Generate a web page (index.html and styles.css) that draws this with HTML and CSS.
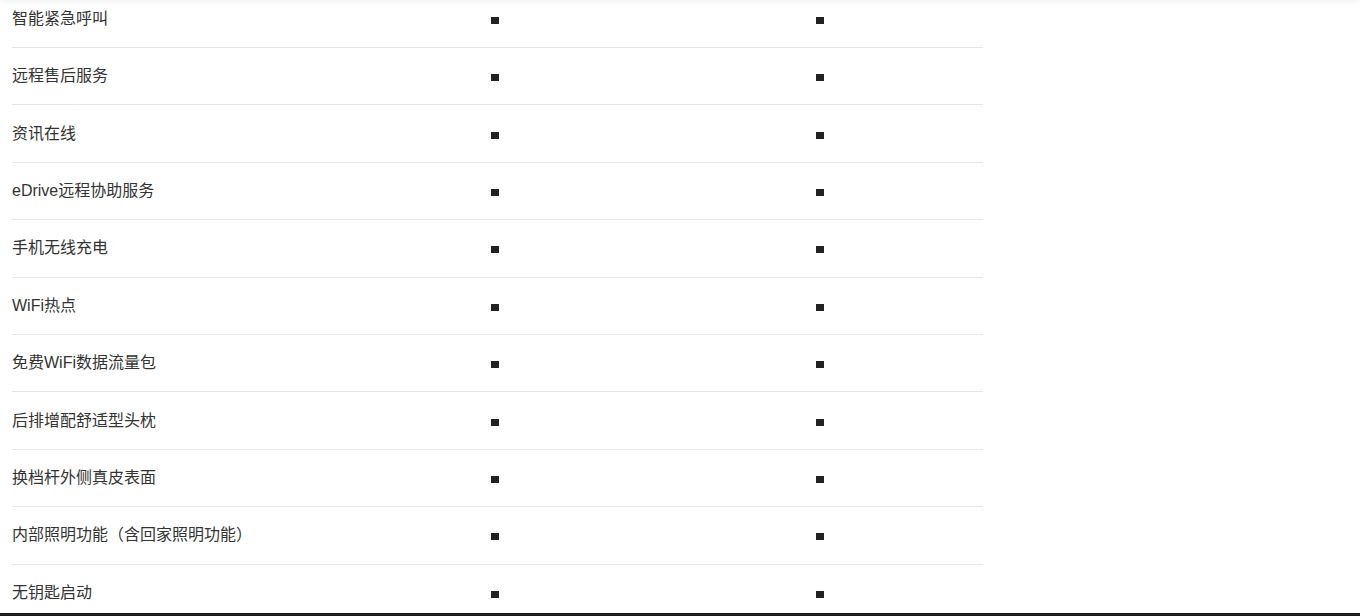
FILE: index.html
```html
<!DOCTYPE html>
<html lang="zh-CN">
<head>
<meta charset="utf-8">
<title>配置</title>
<link rel="stylesheet" href="styles.css">
</head>
<body>
<div class="top-shade"></div>
<main class="page">
  <table class="spec">
    <colgroup><col class="c1"><col class="c2"><col class="c3"></colgroup>
    <tbody>
      <tr><td>智能紧急呼叫</td><td><span class="dot"></span></td><td><span class="dot"></span></td></tr>
      <tr><td>远程售后服务</td><td><span class="dot"></span></td><td><span class="dot"></span></td></tr>
      <tr><td>资讯在线</td><td><span class="dot"></span></td><td><span class="dot"></span></td></tr>
      <tr><td>eDrive远程协助服务</td><td><span class="dot"></span></td><td><span class="dot"></span></td></tr>
      <tr><td>手机无线充电</td><td><span class="dot"></span></td><td><span class="dot"></span></td></tr>
      <tr><td>WiFi热点</td><td><span class="dot"></span></td><td><span class="dot"></span></td></tr>
      <tr><td>免费WiFi数据流量包</td><td><span class="dot"></span></td><td><span class="dot"></span></td></tr>
      <tr><td>后排增配舒适型头枕</td><td><span class="dot"></span></td><td><span class="dot"></span></td></tr>
      <tr><td>换档杆外侧真皮表面</td><td><span class="dot"></span></td><td><span class="dot"></span></td></tr>
      <tr><td>内部照明功能（含回家照明功能）</td><td><span class="dot"></span></td><td><span class="dot"></span></td></tr>
      <tr><td>无钥匙启动</td><td><span class="dot"></span></td><td><span class="dot"></span></td></tr>
    </tbody>
  </table>
</main>
<div class="bottom-bar"></div>
</body>
</html>
```

FILE: styles.css
```css
html, body {
  margin: 0;
  padding: 0;
  background: #fff;
  overflow: hidden;
}
body {
  font-family: "Liberation Sans", "Noto Sans CJK SC", sans-serif;
  font-size: 16px;
  color: #333;
}
.page {
  padding-left: 12px;
}
.spec {
  border-collapse: collapse;
  width: 971px;
  margin-top: -9.4px;
}
.c1 { width: 479px; }
.c2 { width: 325px; }
.c3 { width: 167px; }
.spec td {
  height: 56.4px;
  padding: 0;
  line-height: 22px;
  vertical-align: middle;
  border-bottom: 1px solid #e6e6e6;
  white-space: nowrap;
}
.spec tr:last-child td {
  border-bottom: none;
}
.dot {
  display: inline-block;
  width: 8px;
  height: 7px;
  background: #222;
  position: relative;
  top: 0;
}
.top-shade {
  position: fixed;
  top: -10px;
  left: 0;
  right: 0;
  height: 10px;
  box-shadow: 0 1px 6px rgba(0, 0, 0, 0.07);
  background: #fff;
}
.bottom-bar {
  position: fixed;
  left: 0;
  right: 0;
  bottom: 0;
  height: 3px;
  background: #1c1c1c;
}
```
